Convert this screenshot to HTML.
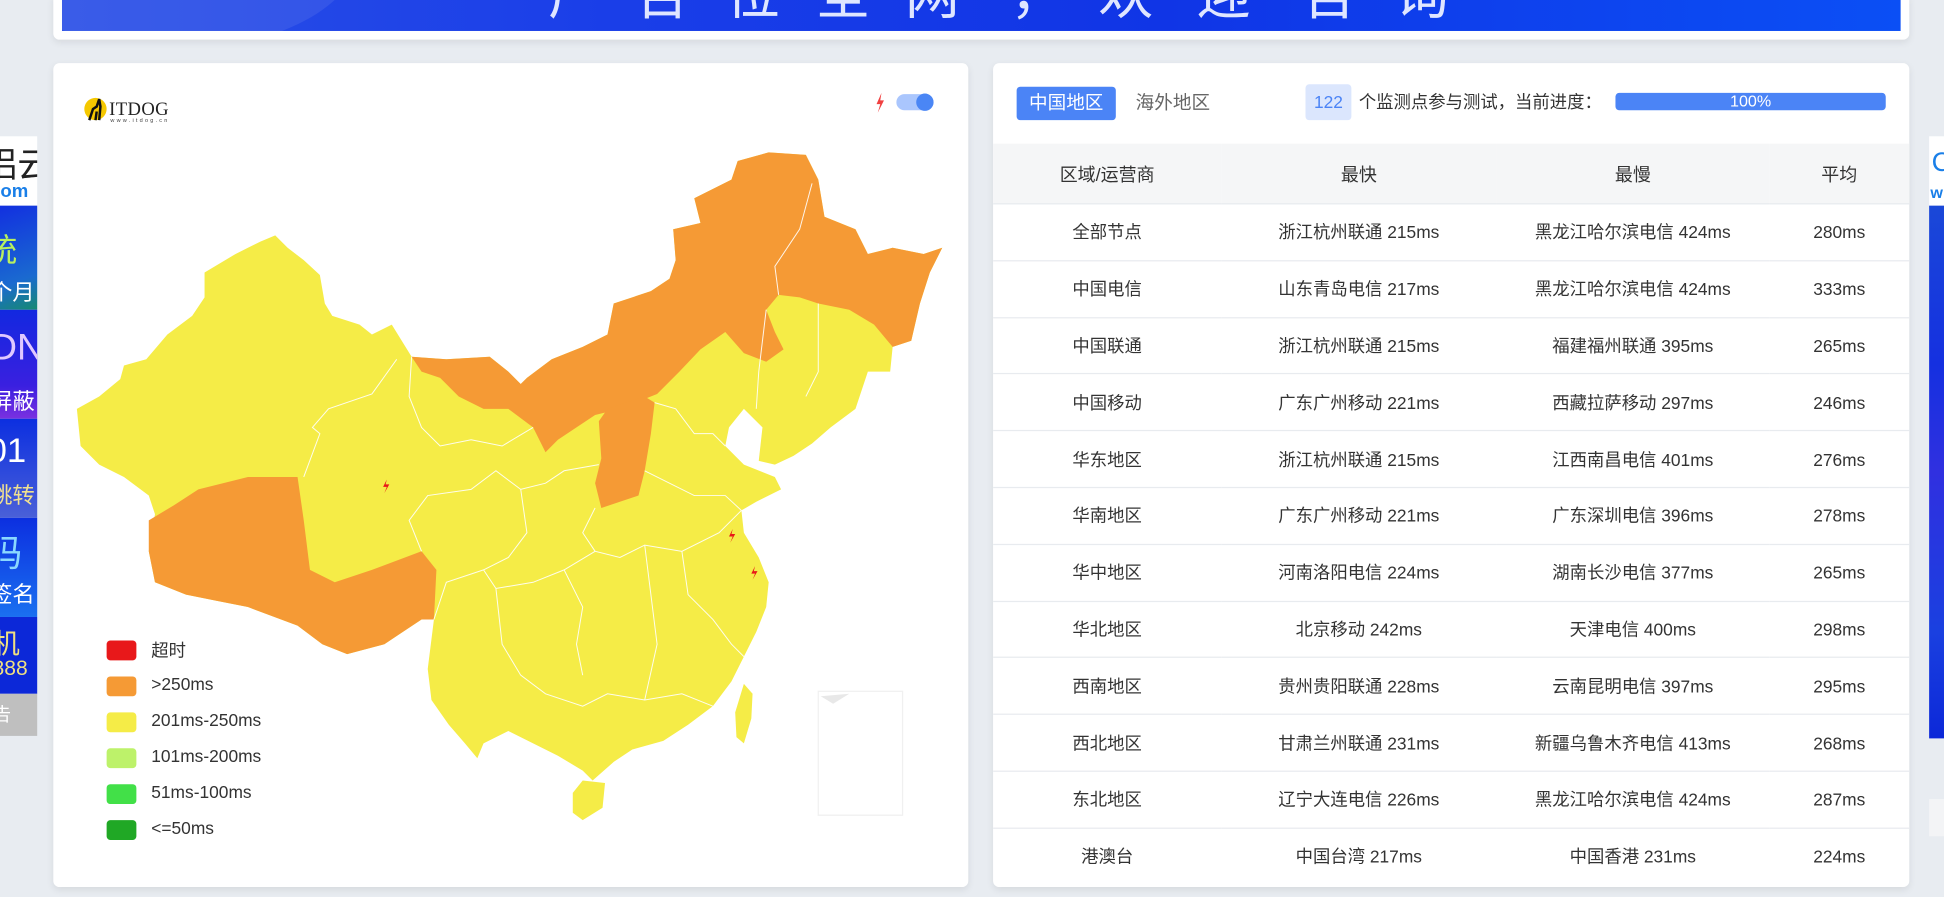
<!DOCTYPE html>
<html><head><meta charset="utf-8">
<style>
html,body{margin:0;padding:0;width:1944px;height:897px;overflow:hidden;background:#e8ecf1;}
#w{position:absolute;left:0;top:0;width:1568px;height:724px;transform:scale(1.2398,1.2389);transform-origin:0 0;font-family:"Liberation Sans","Noto Sans CJK SC",sans-serif;color:#333;}
.card{position:absolute;background:#fff;border-radius:5px;box-shadow:0 2px 6px rgba(0,0,0,.08);}
.ban{position:absolute;left:50px;top:0;width:1483px;height:25px;background:linear-gradient(90deg,#2a4fe6 0%,#1a3ee8 30%,#1035e6 60%,#0b4ff5 100%);overflow:hidden;}
.ban span{position:absolute;top:-40px;font-size:44px;color:#dfe6ff;}
table{border-collapse:collapse;width:739px;font-size:14px;color:#333;table-layout:fixed;}
td,th{text-align:center;height:44.8px;border-bottom:1px solid #e8ebef;font-weight:normal;padding:0;white-space:nowrap;}
th{background:#f5f6f7;height:48px;font-size:14.5px;}
.lg{position:absolute;left:43px;width:24px;height:16px;border-radius:3px;}
.lt{position:absolute;left:79px;font-size:14px;color:#333;}
.ad{position:absolute;overflow:hidden;font-size:22px;color:#fff;white-space:nowrap;}
</style></head><body><div id="w">
<div class="card" style="left:43px;top:-5px;width:1497px;height:37px;"></div>
<div class="ban">
<div style="position:absolute;left:-60px;top:-120px;width:300px;height:160px;border-radius:50%;background:rgba(255,255,255,.08)"></div>
<span style="left:392px">广</span><span style="left:462px">告</span><span style="left:535px">位</span><span style="left:608px">全</span><span style="left:680px">网</span><span style="left:765px">，</span><span style="left:836px">欢</span><span style="left:915px">迎</span><span style="left:1000px">咨</span><span style="left:1075px">询</span>
</div>
<div class="ad" style="left:0;top:110px;width:30px;height:56px;background:#fff;color:#222;"><div style="position:absolute;left:-14px;top:2px;font-size:28px">铝云</div><div style="position:absolute;left:-8px;top:36px;font-size:15px;color:#1a7fe8;font-weight:bold">com</div></div>
<div class="ad" style="left:0;top:166px;width:30px;height:84px;background:linear-gradient(160deg,#1230e0,#1a6ad0 70%,#168a70)"><div style="position:absolute;left:-12px;top:16px;font-size:26px;color:#b8f060">统</div><div style="position:absolute;left:-8px;top:56px;font-size:18px">个月</div></div>
<div class="ad" style="left:0;top:250px;width:30px;height:88px;background:linear-gradient(180deg,#1228e0,#3a20e0 70%,#7a30e0)"><div style="position:absolute;left:-8px;top:14px;font-size:30px;color:#e0c8ff">DN</div><div style="position:absolute;left:-8px;top:60px;font-size:18px">屏蔽</div></div>
<div class="ad" style="left:0;top:338px;width:30px;height:80px;background:linear-gradient(180deg,#0c2fe0,#4a60d8)"><div style="position:absolute;left:-10px;top:10px;font-size:28px">01</div><div style="position:absolute;left:-8px;top:48px;font-size:18px;color:#f0e090">跳转</div></div>
<div class="ad" style="left:0;top:418px;width:30px;height:80px;background:linear-gradient(180deg,#0c2fe0,#1a70f0)"><div style="position:absolute;left:-12px;top:4px;font-size:30px;color:#8ad8ff">码</div><div style="position:absolute;left:-8px;top:48px;font-size:18px">签名</div></div>
<div class="ad" style="left:0;top:498px;width:30px;height:62px;background:#0c28d8"><div style="position:absolute;left:-6px;top:4px;font-size:22px;color:#f0e080">机</div><div style="position:absolute;left:-6px;top:32px;font-size:17px;color:#f0e080">888</div></div>
<div class="ad" style="left:0;top:560px;width:30px;height:34px;background:#bfbfbf"><div style="position:absolute;left:-6px;top:6px;font-size:15px">告</div></div>
<div class="ad" style="left:1556px;top:110px;width:12px;height:56px;background:#fff"><div style="position:absolute;left:2px;top:8px;font-size:22px;color:#1a7fe8">C</div><div style="position:absolute;left:1px;top:38px;font-size:13px;color:#1a7fe8;font-weight:bold">w</div></div>
<div class="ad" style="left:1556px;top:166px;width:12px;height:430px;background:linear-gradient(180deg,#1a48d8,#1530e0 30%,#3030e0 50%,#1a40e0 80%,#0c28d8)"></div>
<div class="ad" style="left:1556px;top:645px;width:12px;height:30px;background:#f3f4f6"></div>
<div class="card" style="left:43px;top:51px;width:738px;height:665px;">
<svg style="position:absolute;left:0;top:0" width="738" height="665" viewBox="43 51 738 665">
<circle cx="77" cy="88" r="9" fill="#f5c800"/>
<path d="M72 97 L75 88 L78 86 L80 80 L81 86 L80 97 M77 97 L78 90" stroke="#111" stroke-width="2" fill="none"/>
<text x="88" y="93" font-family="Liberation Serif,serif" font-size="15" fill="#222" textLength="48">ITDOG</text>
<text x="89" y="98.5" font-family="Liberation Sans,sans-serif" font-size="4.5" fill="#444" textLength="46">www.itdog.cn</text>
<path d="M711 75 L707 84 L710 84 L708 91 L713 81 L710 81 Z" fill="#f04040"/>
<rect x="723" y="76" width="30" height="13" rx="6.5" fill="#aac6fd"/>
<circle cx="746" cy="82.5" r="7" fill="#4a86f5"/>
<path fill="#f5ec47" d="M62 330 L80 320 L97 306 L100 295 L118 290 L135 270 L155 255 L165 240 L165 220 L190 205 L200 200 L210 195 L222 190 L232 200 L245 210 L258 222 L262 245 L268 255 L290 262 L300 270 L316 262 L332 288 L360 290 L395 288 L410 300 L420 310 L425 305 L445 290 L470 280 L490 270 L495 245 L510 240 L525 235 L540 225 L545 210 L543 185 L565 180 L560 160 L590 145 L595 130 L620 123 L650 125 L660 145 L665 175 L690 185 L700 205 L720 200 L745 205 L760 200 L750 220 L742 245 L735 275 L720 280 L718 300 L700 300 L690 330 L670 345 L655 358 L640 368 L625 375 L612 372 L615 345 L600 330 L588 345 L585 360 L600 375 L625 385 L630 395 L610 405 L598 412 L600 430 L612 450 L620 470 L618 490 L610 510 L600 530 L590 550 L575 570 L555 585 L535 598 L510 605 L495 615 L478 630 L470 622 L450 610 L430 600 L410 590 L390 600 L385 612 L375 600 L362 585 L348 565 L345 540 L350 500 L340 500 L310 520 L280 528 L260 520 L240 505 L200 490 L175 485 L150 480 L125 470 L120 445 L125 415 L120 400 L100 385 L80 375 L65 360 Z"/>
<path fill="#f5ec47" d="M600 552 L607 560 L606 580 L600 600 L594 595 L593 575 Z"/>
<path fill="#f5ec47" d="M470 630 L488 632 L486 652 L470 662 L462 656 L462 640 Z"/>
<path fill="#f59a35" d="M120 420 L140 408 L160 395 L200 385 L240 385 L245 420 L250 460 L270 470 L300 460 L340 445 L352 460 L350 500 L340 500 L310 520 L280 528 L260 520 L240 505 L200 490 L175 485 L150 480 L125 470 L120 445 Z"/>
<path fill="#f59a35" d="M332 288 L360 290 L395 288 L410 300 L420 310 L425 305 L445 290 L470 280 L490 270 L495 245 L510 240 L525 235 L540 225 L545 210 L543 185 L565 180 L560 160 L590 145 L595 130 L620 123 L650 125 L660 145 L665 175 L690 185 L700 205 L720 200 L745 205 L760 200 L750 220 L742 245 L735 275 L720 280 L705 262 L685 250 L660 245 L645 240 L628 238 L618 250 L625 268 L632 282 L618 292 L600 285 L585 268 L565 282 L548 300 L530 318 L500 330 L480 335 L465 345 L450 355 L440 365 L430 345 L410 330 L390 330 L370 320 L355 305 L340 300 Z"/>
<path fill="#f59a35" d="M483 340 L490 330 L505 325 L520 320 L528 325 L525 350 L520 380 L515 400 L500 405 L485 410 L480 390 L485 370 Z"/>
<g stroke="#fff" stroke-width="0.8" fill="none" opacity="0.9">
<path d="M245 385 L258 350 L252 345 L265 330 L300 318 L320 290"/>
<path d="M332 288 L330 320 L340 345 L355 360 L380 355 L405 360 L430 345"/>
<path d="M340 445 L330 420 L345 400 L380 395 L400 380 L420 395 L440 390 L455 380 L483 375"/>
<path d="M350 500 L360 470 L390 460 L400 475 L430 470 L455 460 L480 445 L500 450 L520 440 L550 445 L580 430 L598 412"/>
<path d="M400 475 L405 520 L420 545 L440 560 L470 570 L490 560 L520 565 L550 560 L575 570"/>
<path d="M455 460 L470 490 L465 520 L470 545 M520 440 L525 480 L530 520 L520 565 M550 445 L555 480 L575 500 L590 520 L600 530"/>
<path d="M528 325 L545 330 L560 350 L575 350 L585 360 M520 380 L540 390 L560 400 L585 400 L598 412"/>
<path d="M480 410 L470 430 L480 445 M420 395 L425 430 L410 450 L390 460"/>
<path d="M618 250 L612 300 L610 330 M660 245 L660 300 L650 320"/>
<path d="M655 148 L645 185 L625 215 L628 238"/>
</g>
<path d="M312 387 L309 393 L312 393 L310 398 L314 391 L311 391 Z" fill="#e81818"/>
<path d="M591 427 L588 433 L591 433 L589 438 L593 431 L590 431 Z" fill="#e81818"/>
<path d="M609 457 L606 463 L609 463 L607 468 L611 461 L608 461 Z" fill="#e81818"/>
<rect x="660" y="558" width="68" height="100" fill="none" stroke="#f0f0f0" stroke-width="1"/>
<path d="M662 562 L685 560 L672 568 Z" fill="#e8e8e8"/>
</svg>
<div class="lg" style="top:466px;background:#e8181a"></div><div class="lt" style="top:464px">超时</div>
<div class="lg" style="top:495px;background:#f59a35"></div><div class="lt" style="top:493px">&gt;250ms</div>
<div class="lg" style="top:524px;background:#f5ec47"></div><div class="lt" style="top:522px">201ms-250ms</div>
<div class="lg" style="top:553px;background:#bdf26a"></div><div class="lt" style="top:551px">101ms-200ms</div>
<div class="lg" style="top:582px;background:#42e048"></div><div class="lt" style="top:580px">51ms-100ms</div>
<div class="lg" style="top:611px;background:#20a825"></div><div class="lt" style="top:609px">&lt;=50ms</div>
</div>
<div class="card" style="left:801px;top:51px;width:739px;height:665px;overflow:hidden;">
<div style="position:absolute;left:19px;top:19px;width:80px;height:27px;background:#4b84f6;border-radius:3px;color:#fff;font-size:15px;line-height:27px;text-align:center">中国地区</div>
<div style="position:absolute;left:115px;top:19px;height:27px;color:#666;font-size:15px;line-height:27px">海外地区</div>
<div style="position:absolute;left:252px;top:17px;width:37px;height:29px;background:#dbe6fd;border-radius:3px;color:#4b84f6;font-size:14px;line-height:29px;text-align:center">122</div>
<div style="position:absolute;left:295px;top:17px;height:29px;font-size:14px;line-height:29px;color:#333">个监测点参与测试，当前进度：</div>
<div style="position:absolute;left:502px;top:24px;width:218px;height:14px;background:#4b84f6;border-radius:3px;color:#fff;font-size:13px;line-height:14px;text-align:center">100%</div>
<div style="position:absolute;left:0;top:65px;width:739px;">
<table>
<colgroup><col style="width:184px"><col style="width:222px"><col style="width:220px"><col style="width:113px"></colgroup>
<tr><th>区域/运营商</th><th>最快</th><th>最慢</th><th>平均</th></tr>
<tr><td>全部节点</td><td>浙江杭州联通 215ms</td><td>黑龙江哈尔滨电信 424ms</td><td>280ms</td></tr>
<tr><td>中国电信</td><td>山东青岛电信 217ms</td><td>黑龙江哈尔滨电信 424ms</td><td>333ms</td></tr>
<tr><td>中国联通</td><td>浙江杭州联通 215ms</td><td>福建福州联通 395ms</td><td>265ms</td></tr>
<tr><td>中国移动</td><td>广东广州移动 221ms</td><td>西藏拉萨移动 297ms</td><td>246ms</td></tr>
<tr><td>华东地区</td><td>浙江杭州联通 215ms</td><td>江西南昌电信 401ms</td><td>276ms</td></tr>
<tr><td>华南地区</td><td>广东广州移动 221ms</td><td>广东深圳电信 396ms</td><td>278ms</td></tr>
<tr><td>华中地区</td><td>河南洛阳电信 224ms</td><td>湖南长沙电信 377ms</td><td>265ms</td></tr>
<tr><td>华北地区</td><td>北京移动 242ms</td><td>天津电信 400ms</td><td>298ms</td></tr>
<tr><td>西南地区</td><td>贵州贵阳联通 228ms</td><td>云南昆明电信 397ms</td><td>295ms</td></tr>
<tr><td>西北地区</td><td>甘肃兰州联通 231ms</td><td>新疆乌鲁木齐电信 413ms</td><td>268ms</td></tr>
<tr><td>东北地区</td><td>辽宁大连电信 226ms</td><td>黑龙江哈尔滨电信 424ms</td><td>287ms</td></tr>
<tr><td style="border:none">港澳台</td><td style="border:none">中国台湾 217ms</td><td style="border:none">中国香港 231ms</td><td style="border:none">224ms</td></tr>
</table>
</div>
</div>
</div></body></html>
